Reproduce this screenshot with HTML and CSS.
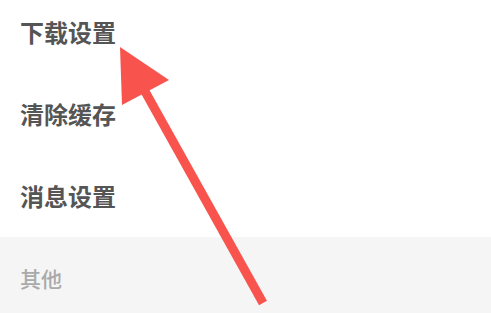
FILE: index.html
```html
<!DOCTYPE html>
<html lang="zh-CN">
<head>
<meta charset="utf-8">
<link rel="stylesheet" href="styles.css">
</head>
<body>
<div class="page">
  <ul class="menu">
    <li class="item">下载设置</li>
    <li class="item">清除缓存</li>
    <li class="item">消息设置</li>
  </ul>
  <div class="section">
    <div class="section-title">其他</div>
  </div>
  <svg class="arrow" width="491" height="313" viewBox="0 0 491 313">
    <line x1="142" y1="86" x2="263" y2="303" stroke="#f9534e" stroke-width="9" />
    <polygon points="120,47 169,80 122,105" fill="#f9534e" />
  </svg>
</div>
</body>
</html>
```
FILE: styles.css
```css
html, body {
  margin: 0;
  padding: 0;
  background: #ffffff;
}
.page {
  position: relative;
  width: 491px;
  height: 313px;
  overflow: hidden;
  font-family: "Noto Sans CJK SC", "Noto Sans", sans-serif;
}
.menu {
  list-style: none;
  margin: -9px 0 0 0;
  padding: 0;
}
.item {
  height: 82px;
  display: flex;
  align-items: center;
  padding-left: 20px;
  font-size: 24px;
  font-weight: 700;
  color: #555555;
  line-height: 1;
}
.section {
  background: #f5f5f5;
  height: 90px;
  padding-left: 20px;
  padding-top: 30px;
  box-sizing: border-box;
}
.section-title {
  font-size: 21px;
  font-weight: 500;
  color: #aaaaaa;
  line-height: 22px;
}
.arrow {
  position: absolute;
  left: 0;
  top: 0;
}
```
